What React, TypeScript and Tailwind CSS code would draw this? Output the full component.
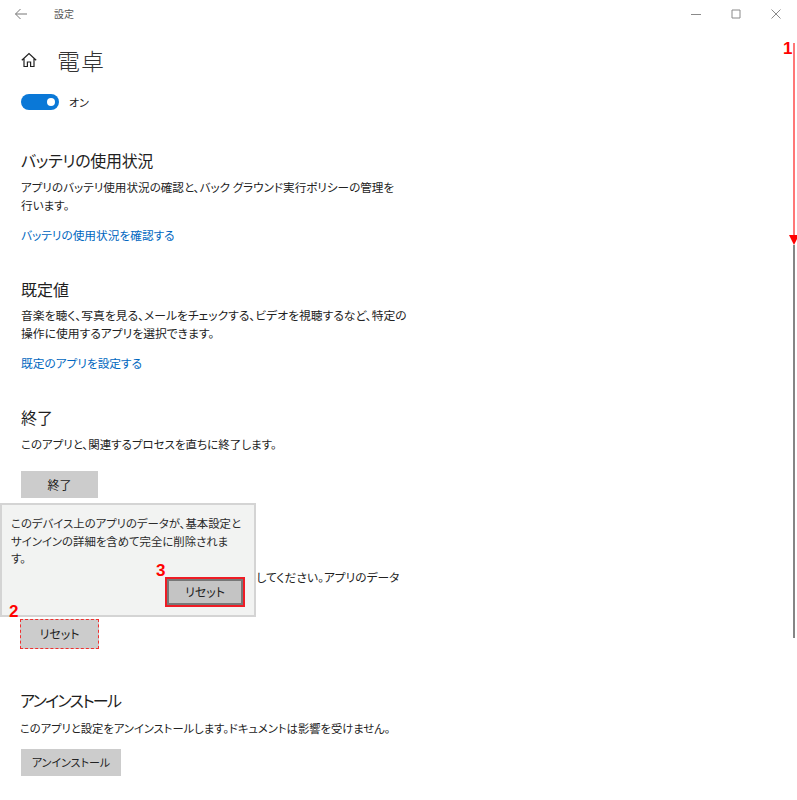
function Section({ title, text, className, titleClass = "", textClass = "text-[11.6px]", children }: { title: string; text: string[]; className: string; titleClass?: string; textClass?: string; children: React.ReactNode }) {
  return (
    <section className={className}>
      <h2 className={`text-[16px] leading-6 text-[#1f1f1f] ${titleClass}`}>{title}</h2>
      <div className={`mt-[5px] w-[400px] leading-[18px] text-[#222] ${textClass}`}>
        {text.map((line) => (
          <p key={line} className="whitespace-nowrap">{line}</p>
        ))}
      </div>
      {children}
    </section>
  );
}

function GrayButton({ label, className }: { label: string; className: string }) {
  return (
    <button className={`flex items-center justify-center bg-[#cccccc] text-[#222] ${className}`}>{label}</button>
  );
}

export default function App() {
  return (
    <div className="relative h-[800px] w-[797px] overflow-hidden bg-white font-['Noto_Sans_CJK_JP','Noto_Sans',sans-serif] [font-feature-settings:'palt']">
      {/* Title bar */}
      <div className="flex h-[27px] items-center">
        <svg className="ml-[15px] text-[#777]" width="12" height="12" viewBox="0 0 12 12" fill="none" stroke="currentColor">
          <path d="M0.5 6 H12 M5.5 1 L0.5 6 L5.5 11" />
        </svg>
        <span className="ml-[27px] text-[10px] text-[#555]">設定</span>
        <div className="ml-auto mr-[16px] flex items-center gap-[30px] text-[#8a8a8a]">
          <svg width="10" height="10" viewBox="0 0 10 10" fill="none" stroke="currentColor"><path d="M0 5.5 H10" /></svg>
          <svg width="10" height="10" viewBox="0 0 10 10" fill="none" stroke="currentColor"><path d="M1 1 H9 V9 H1 Z" /></svg>
          <svg width="10" height="10" viewBox="0 0 10 10" fill="none" stroke="currentColor"><path d="M0.5 0.5 L9.5 9.5 M9.5 0.5 L0.5 9.5" /></svg>
        </div>
      </div>

      {/* Header */}
      <div className="mt-[17px] flex h-[32px] items-center pl-[21px]">
        <svg className="text-[#222]" width="16" height="16" viewBox="0 0 16 16" fill="none" stroke="currentColor" strokeWidth="1.2">
          <path d="M0.8 8.2 L8 1.5 L15.2 8.2 M3 6.4 V14.5 H6.4 V10 H9.6 V14.5 H13 V6.4" />
        </svg>
        <h1 className="ml-[20px] text-[23px] font-light leading-8 tracking-[1px] text-[#333]">電卓</h1>
      </div>

      {/* Toggle */}
      <div className="mt-[17px] flex h-[18px] items-center pl-[21px]">
        <div className="flex h-[16px] w-[38px] items-center justify-end rounded-full bg-[#0a78d7] pr-[4px]">
          <div className="size-[8px] rounded-full bg-white" />
        </div>
        <span className="ml-[10px] text-[11px] text-[#222]">オン</span>
      </div>

      <div className="pl-[21px]">
        <Section
          title="バッテリの使用状況"
          titleClass="pb-px tracking-[-0.3px]"
          text={["アプリのバッテリ使用状況の確認と、バック グラウンド実行ポリシーの管理を", "行います。"]}
          className="mt-[37px]"
        >
          <a className="mt-[12px] block text-[11.7px] leading-[18px] text-[#0067c0]">バッテリの使用状況を確認する</a>
        </Section>

        <Section
          title="既定値"
          text={["音楽を聴く、写真を見る、メールをチェックする、ビデオを視聴するなど、特定の", "操作に使用するアプリを選択できます。"]}
          textClass="text-[11.8px]"
          className="mt-[33px]"
        >
          <a className="mt-[12px] block text-[11.7px] leading-[18px] text-[#0067c0]">既定のアプリを設定する</a>
        </Section>

        <Section
          title="終了"
          titleClass="pb-px"
          text={["このアプリと、関連するプロセスを直ちに終了します。"]}
          textClass="text-[11.5px]"
          className="mt-[33px]"
        >
          <GrayButton label="終了" className="mt-[18px] h-[27px] w-[77px] text-[12px]" />
        </Section>

        <Section
          title="リセット"
          text={["このアプリが正常に機能しない場合は、リセットしてください。アプリのデータ", "が削除されます。"]}
          textClass="text-[11.76px]"
          className="mt-[41px]"
        >
          <button className="-ml-px mt-[15px] flex h-[30px] w-[79px] items-center justify-center border border-dashed border-[#f03030] bg-[#cccccc] text-[12px] text-[#222]">
            リセット
          </button>
        </Section>

        <Section
          title="アンインストール"
          titleClass="pb-[2px] -ml-px tracking-[-1.7px]"
          text={["このアプリと設定をアンインストールします。ドキュメントは影響を受けません。"]}
          textClass="-ml-px text-[11.3px]"
          className="mt-[39px]"
        >
          <GrayButton label="アンインストール" className="mt-[12px] h-[27px] w-[100px] text-[11px]" />
        </Section>
      </div>

      {/* Flyout over the reset section */}
      <div className="absolute left-0 top-[503px] flex h-[114px] w-[256px] flex-col justify-between border-2 border-[#d4d4d4] bg-[#f2f3f2] pb-[8px] pl-[9px] pr-[9px] pt-[10px]">
        <p className="whitespace-nowrap text-[11.4px] leading-[17.5px] text-[#2b2b2b]">
          このデバイス上のアプリのデータが、基本設定と
          <br />
          サインインの詳細を含めて完全に削除されま
          <br />
          す。
        </p>
        <button className="flex h-[30px] w-[80px] items-center justify-center self-end border-2 border-[#ee1c25] bg-[#c4c4c4] text-[12px] text-[#222] shadow-[inset_0_0_0_2px_#777]">
          リセット
        </button>
      </div>

      {/* Scroll thumb */}
      <div className="absolute left-[793px] top-[245px] h-[393px] w-[2px] bg-[#858585]" />

      {/* Annotations */}
      <div className="absolute left-[793px] top-[43px] h-[194px] w-[2px] bg-[#f77]" />
      <svg className="absolute left-[789px] top-[235px]" width="10" height="10" viewBox="0 0 10 10">
        <path d="M0 0 H10 L5 10 Z" fill="#f00" />
      </svg>
      <span className="absolute left-[783px] top-[41px] font-['Liberation_Sans',sans-serif] text-[17px] font-bold leading-4 text-[#f00]">1</span>
      <span className="absolute left-[9px] top-[604px] font-['Liberation_Sans',sans-serif] text-[17px] font-bold leading-4 text-[#f00]">2</span>
      <span className="absolute left-[156px] top-[563px] font-['Liberation_Sans',sans-serif] text-[17px] font-bold leading-4 text-[#f00]">3</span>
    </div>
  );
}
